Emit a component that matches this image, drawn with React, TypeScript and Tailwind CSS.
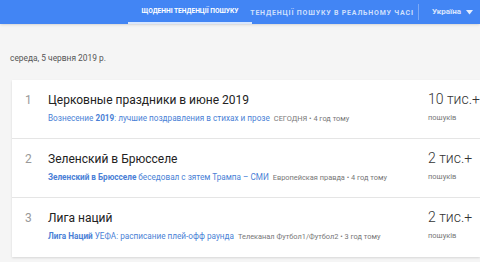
const items = [
  {
    n: 1,
    title: "Церковные праздники в июне 2019",
    parts: [
      { t: "Вознесение ", b: false },
      { t: "2019", b: true },
      { t: ": лучшие поздравления в стихах и прозе", b: false },
    ],
    source: "СЕГОДНЯ • 4 год тому",
    count: "10 тис.+",
  },
  {
    n: 2,
    title: "Зеленский в Брюсселе",
    parts: [
      { t: "Зеленский в Брюсселе", b: true },
      { t: " беседовал с зятем Трампа – СМИ", b: false },
    ],
    source: "Европейская правда • 4 год тому",
    count: "2 тис.+",
  },
  {
    n: 3,
    title: "Лига наций",
    parts: [
      { t: "Лига Наций", b: true },
      { t: " УЕФА: расписание плей-офф раунда", b: false },
    ],
    source: "Телеканал Футбол1/Футбол2 • 3 год тому",
    count: "2 тис.+",
  },
];

const App = () => {
  return (
    <div className="w-[480px] h-[262px] overflow-hidden bg-[#f5f5f5] font-['Roboto',sans-serif]">
      <div className="h-[24px] bg-[#4285f4] flex items-stretch shadow-sm">
        <div className="w-[128px]" />
        <div className="w-[124px] flex items-center justify-center whitespace-nowrap text-[6.6px] font-bold text-white border-b-2 border-white/80 pt-[2px]">
          ЩОДЕННІ ТЕНДЕНЦІЇ ПОШУКУ
        </div>
        <div className="w-[160px] flex items-center justify-center whitespace-nowrap text-[7px] tracking-[0.8px] font-bold text-white/75 pt-[2px]">
          ТЕНДЕНЦІЇ ПОШУКУ В РЕАЛЬНОМУ ЧАСІ
        </div>
        <div className="w-px bg-white/30 my-[4px] ml-[6px]" />
        <div className="flex items-center gap-[5px] pl-[13px] text-[8px] font-bold text-white/80">
          Україна
          <svg width="7" height="5" viewBox="0 0 7 5">
            <path d="M0 0h7L3.5 4.5z" fill="rgba(255,255,255,0.85)" />
          </svg>
        </div>
      </div>

      <div className="pl-[10px] pt-[28px] text-[8.4px] text-[#555]">середа, 5 червня 2019 р.</div>

      <div className="ml-[12px] mt-[15px] bg-white shadow-[0_1px_2px_rgba(0,0,0,0.12)]">
        {items.map((it) => (
          <div
            key={it.n}
            className="h-[59px] flex items-start border-b border-[#e5e5e5] last:border-b-0"
          >
            <div className="w-[36px] pl-[13px] pt-[11px] text-[12px] text-[#999]">{it.n}</div>
            <div className="flex-1 pt-[11px]">
              <div className="text-[12px] leading-[18px] text-[#222]">{it.title}</div>
              <div className="mt-[3px] text-[8.2px] leading-[12px] whitespace-nowrap">
                <span className="text-[#4a7fd6]">
                  {it.parts.map((p, i) =>
                    p.b ? <b key={i}>{p.t}</b> : <span key={i}>{p.t}</span>
                  )}
                </span>
                <span className="ml-[4px] text-[7.4px] text-[#777]">{it.source}</span>
              </div>
            </div>
            <div className="w-[52px] pt-[9px]">
              <div className="text-[14px] leading-[20px] font-light text-[#333] whitespace-nowrap">{it.count}</div>
              <div className="mt-[3px] text-[7.5px] leading-[12px] text-[#777]">пошуків</div>
            </div>
          </div>
        ))}
      </div>
    </div>
  );
};

export default App;
